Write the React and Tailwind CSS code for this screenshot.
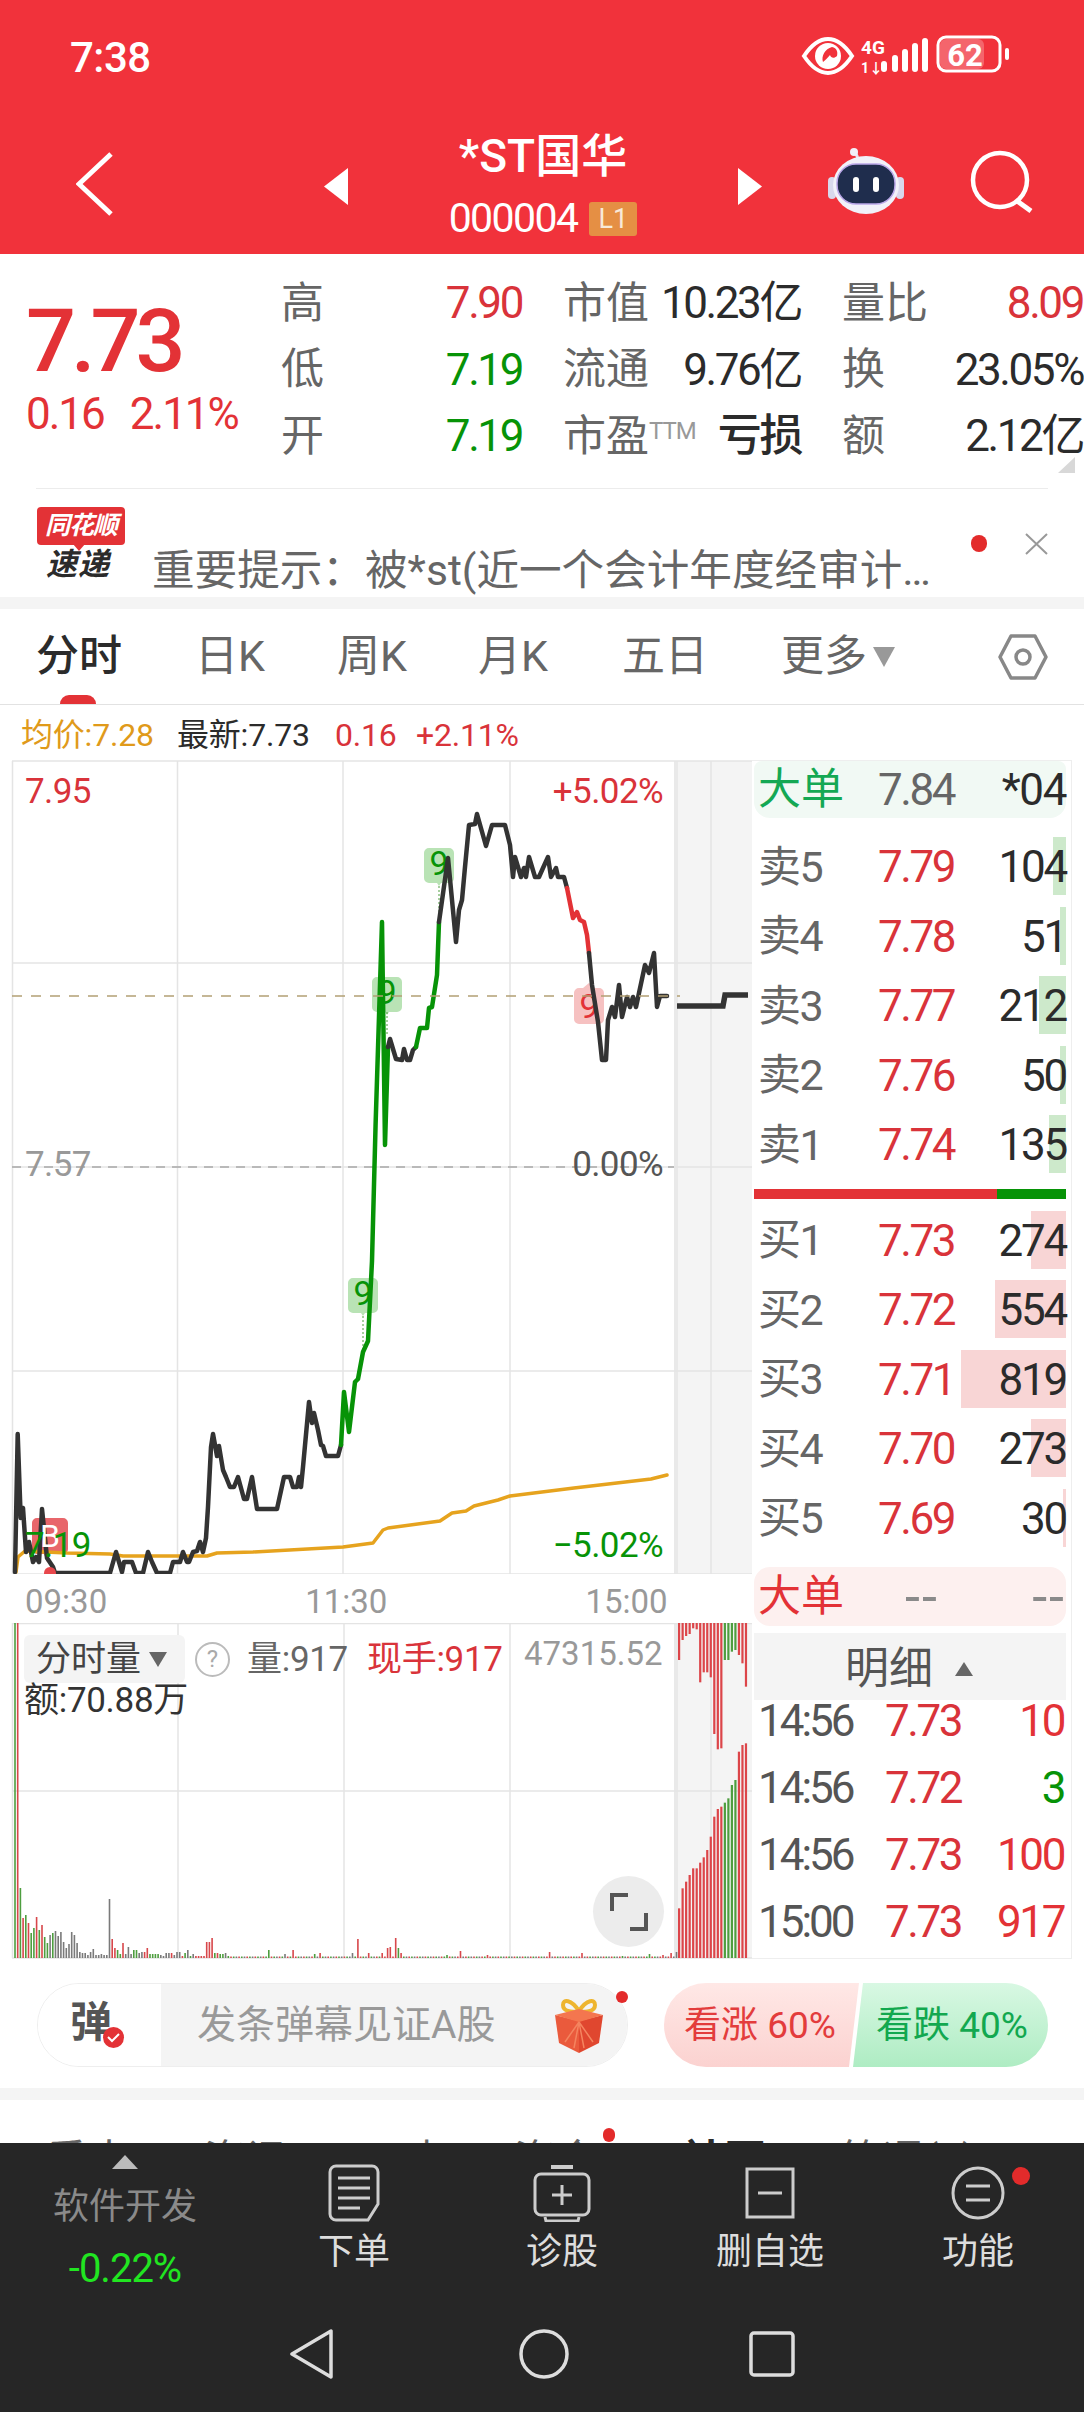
import React from "react";

const RED = "#e33236";
const GREEN = "#079307";

const priceBlack1 =
  "15,1572 17.7,1434 20.7,1518 23,1508 26,1552 29,1542 33,1562 36,1557 39,1562 42,1509 47,1558 53,1567 55,1573 110,1573 116,1552 122,1572 124,1562 132,1562 136,1573 143,1573 148,1552 152,1562 157,1573 170,1573 173,1562 180,1562 183,1552 187,1562 189,1562 193,1552 197,1551 200,1542 203,1552 206,1538 208,1507 211,1447 213,1434 217,1456 219,1446 223,1470 226,1477 230,1487 234,1487 238,1477 244,1499 247,1499 252,1477 257,1509 277,1509 284,1477 290,1477 293,1487 297,1487 299,1477 301,1487 303,1467 309,1402 312,1423 314,1413 318,1430 321,1445 323,1446 326,1456 338,1456 341,1445";
const priceGreen1 =
  "341,1445 344,1392 349,1432 355,1382 358,1379 363,1352 368,1341 372,1261 375.6,1124 382,922 385,1145 388,1047";
const priceBlack2 =
  "388,1047 390,1039 396,1059 402,1060 404,1049 407,1060 410,1060 413,1050 416,1047";
const priceGreen2 =
  "416,1047 420,1028 427,1028 429,1008 432,1007 437,975 439,922";
const priceBlack3 =
  "439,922 448,858 456,942 459,910 462,900 465,867 469,825 475,824 477,814 486,846 492,825 505,825 510,845 513,877 515,857 521,877 524,868 526,877 529,857 535,877 539,877 543,868 548,857 551,877 556,868 558,877 564,877 567,888";
const priceRed = "567,888 573,918 577,912 580,920 584,922 587,935 589,953";
const priceBlack4 =
  "589,953 592,985 598,1022 602,1060 606,1060 608,1020 612,1007 615,1017 619,985 622,1017 627,997 630,1007 633,997 636,1007 645,965 649,973 654,953 657,1007 660,996 667,996";
const avgLine =
  "16,1572 18,1557 25,1551 67,1553 110,1554 123,1556 207,1556 217,1553 253,1552 343,1547 373,1543 383,1530 388,1528 440,1521 452,1513 466,1511 474,1506 498,1500 510,1496 574,1488 651,1479 667,1475";

// volume bars, first part read off the picture, the rest is mostly flat
const volHead =
  "g335 r335 g70 r40 g43 r35 g25 g30 r41 g28 r33 g21 g15 k23 g25 k27 k22 k26 k16 k10 k14 k26 k23 k15 k6 k5 k5 k3 k6 k9 k3 k3 k4 k3 k3 k59 r19 r10 g8 g4 r15 k4 k11 k4 g8 g8 k5 k6 r6 r10 g4 g4 g4 g4 k3 k2 k5 k5 r5 k3 k6 k6 r2 g5 k8 g2 k4 r2 r2 r2 r2 r16 r16 r20 g5 r5 g4 g4 k5 g2";
const volPeaks = { 94: "g8", 100: "k4", 103: "r8", 111: "g4", 113: "r5", 125: "k5", 127: "r19", 131: "r5", 136: "r5", 138: "r10", 139: "r11", 141: "r20", 142: "g10", 143: "r5", 160: "g3", 165: "r7", 175: "r3", 198: "r6", 210: "r5", 225: "g2", 235: "g4", 240: "r3", 243: "r5", 245: "k6" };
const barColors = { r: "#d8474b", g: "#4e9e3f", k: "#7a7a7a" };
const volBars = Array.from({ length: 246 }, (_, i) => {
  const heads = volHead.split(" ");
  const tok = heads[i] || volPeaks[i] || (i % 3 === 0 ? "g1.5" : i % 3 === 1 ? "k1.5" : "r1.5");
  return { x: 15 + i * 2.7, color: barColors[tok[0]], h: Number(tok.slice(1)) };
});

const afterTop = [120, 60, 48, 42, 25, 28, 187, 157, 157, 172, 342, 388, 385, 120, 120, 95, 90, 105, 130, 200];
const afterBottom = [865, 805, 785, 765, 745, 745, 728, 712, 690, 650, 590, 567, 560, 548, 535, 495, 480, 395, 375, 370];
const afterColor = (i) => (i >= 13 && i <= 16 ? "#4e9e3f" : "#dc4549");

const sells = [
  ["卖5", "7.79", "104", 13],
  ["卖4", "7.78", "51", 6],
  ["卖3", "7.77", "212", 27],
  ["卖2", "7.76", "50", 6],
  ["卖1", "7.74", "135", 17],
];
const buys = [
  ["买1", "7.73", "274", 35],
  ["买2", "7.72", "554", 71],
  ["买3", "7.71", "819", 105],
  ["买4", "7.70", "273", 35],
  ["买5", "7.69", "30", 3],
];
const ticks = [
  ["14:56", "7.73", "10", RED],
  ["14:56", "7.72", "3", GREEN],
  ["14:56", "7.73", "100", RED],
  ["15:00", "7.73", "917", RED],
];

const Line = ({ points, color, width = 4.5 }) => (
  <polyline points={points} fill="none" stroke={color} strokeWidth={width} strokeLinejoin="round" strokeLinecap="round" />
);

const NineTag = ({ x, y, fill, color }) => (
  <g>
    <path d={`M${x + 5} ${y}h20a5 5 0 0 1 5 5v25a5 5 0 0 1 -5 5h-8l-2 3l-2 -3h-8a5 5 0 0 1 -5 -5v-25a5 5 0 0 1 5 -5z`} fill={fill} />
    <text x={x + 15} y={y + 27} textAnchor="middle" fontSize="34" fill={color}>9</text>
  </g>
);

const PriceChart = () => (
  <svg className="block" width="752" height="814" viewBox="0 760 752 814">
    <rect x="674" y="761" width="78" height="813" fill="#f4f4f4" />
    <rect x="674" y="761" width="4" height="813" fill="#e9e9e9" />
    <g stroke="#e4e4e4" strokeWidth="1.5">
      <line x1="12" y1="761" x2="752" y2="761" />
      <line x1="12" y1="963" x2="752" y2="963" />
      <line x1="12" y1="1167" x2="752" y2="1167" />
      <line x1="12" y1="1371" x2="752" y2="1371" />
      <line x1="12" y1="1574" x2="752" y2="1574" />
      <line x1="12.5" y1="761" x2="12.5" y2="1574" />
      <line x1="177.5" y1="761" x2="177.5" y2="1574" />
      <line x1="343" y1="761" x2="343" y2="1574" />
      <line x1="510" y1="761" x2="510" y2="1574" />
      <line x1="711" y1="761" x2="711" y2="1574" />
    </g>
    <line x1="12" y1="1167" x2="674" y2="1167" stroke="#a9a9a9" strokeWidth="1.5" strokeDasharray="9 7" />
    <g fontSize="35" letterSpacing="-0.6">
      <text x="25" y="803" fill="#d9333a">7.95</text>
      <text x="663" y="803" fill="#d9333a" textAnchor="end">+5.02%</text>
      <text x="25" y="1176" fill="#999999">7.57</text>
      <text x="663" y="1176" fill="#555555" textAnchor="end">0.00%</text>
      <text x="663" y="1557" fill={GREEN} textAnchor="end">−5.02%</text>
    </g>

    <NineTag x={372} y={977} fill="#b9e3b5" color={GREEN} />
    <NineTag x={424} y={848} fill="#b9e3b5" color={GREEN} />
    <NineTag x={348} y={1278} fill="#b9e3b5" color={GREEN} />
    <path d="M579 988h20a5 5 0 0 1 5 5v26a5 5 0 0 1 -5 5h-20a5 5 0 0 1 -5 -5v-26a5 5 0 0 1 5 -5z M589 983l6 5h-12z" fill="#f6c1c1" />
    <text x="589" y="1018" textAnchor="middle" fontSize="34" fill={RED}>9</text>
    <line x1="387" y1="1012" x2="387" y2="1036" stroke="#4e9e3f" strokeWidth="1" strokeDasharray="2 2" />
    <line x1="439" y1="886" x2="439" y2="920" stroke="#4e9e3f" strokeWidth="1" strokeDasharray="2 2" />
    <line x1="363" y1="1316" x2="363" y2="1350" stroke="#4e9e3f" strokeWidth="1" strokeDasharray="2 2" />

    <path d="M37 1518h26a5 5 0 0 1 5 5v26a5 5 0 0 1 -5 5h-13l-3 8l-3 -8h-7a5 5 0 0 1 -5 -5v-26a5 5 0 0 1 5 -5z" fill="#e8666b" />
    <Line points={avgLine} color="#e6a31e" width="3.5" />
    <Line points={priceBlack1} color="#333333" />
    <Line points={priceGreen1} color={GREEN} />
    <Line points={priceBlack2} color="#333333" />
    <Line points={priceGreen2} color={GREEN} />
    <Line points={priceBlack3} color="#333333" />
    <Line points={priceRed} color={RED} />
    <Line points={priceBlack4} color="#333333" />
    <polyline points="677,1006 723,1006 725,995 748,995" fill="none" stroke="#333333" strokeWidth="5.5" />
    <line x1="12" y1="996" x2="680" y2="996" stroke="#b3a074" strokeWidth="1.5" strokeDasharray="10 9" />
    <text x="50" y="1547" textAnchor="middle" fontSize="32" fill="#ffffff">B</text>
    <text x="25" y="1557" fontSize="35" letterSpacing="-0.6" fill={GREEN}>7.19</text>
    <circle cx="50" cy="1573" r="6" fill="#e8474c" />
  </svg>
);

const VolumeChart = () => (
  <svg className="block" width="752" height="336" viewBox="0 1623 752 336">
    <rect x="674" y="1623" width="78" height="335" fill="#f4f4f4" />
    <rect x="674" y="1623" width="4" height="335" fill="#e9e9e9" />
    <g stroke="#e4e4e4" strokeWidth="1.5">
      <line x1="12" y1="1623.5" x2="752" y2="1623.5" />
      <line x1="12" y1="1791" x2="752" y2="1791" />
      <line x1="12" y1="1958" x2="752" y2="1958" />
      <line x1="12.5" y1="1623" x2="12.5" y2="1958" />
      <line x1="178" y1="1623" x2="178" y2="1958" />
      <line x1="344" y1="1623" x2="344" y2="1958" />
      <line x1="510" y1="1623" x2="510" y2="1958" />
      <line x1="711" y1="1623" x2="711" y2="1958" />
    </g>
    {volBars.map((b, i) => (
      <rect key={i} x={b.x - 0.8} y={1958 - b.h} width="1.6" height={b.h} fill={b.color} />
    ))}
    {afterTop.map((v, i) => (
      <rect key={i} x={679 + i * 3.52 - 1} y="1623" width="2.2" height={v / 3 - 3} fill={afterColor(i)} />
    ))}
    {afterBottom.map((v, i) => (
      <rect key={i} x={679 + i * 3.52 - 1} y={1620 + v / 3} width="2.2" height={1958 - 1620 - v / 3} fill={afterColor(i)} />
    ))}
  </svg>
);

const Stat = ({ label, value, color = "text-[#2b2b2b]", width = "w-[241px]", bold = false, sup }) => (
  <div className={`${width} flex items-center justify-between`}>
    <span className="text-[43px] leading-none text-[#666666]">
      {label}
      {sup && <span className="text-[24px] align-[12px] text-[#999999] tracking-[-1px]">{sup}</span>}
    </span>
    <span className={`text-[44px] leading-none tracking-[-2.4px] ${color} ${bold ? "font-medium" : ""}`}>{value}</span>
  </div>
);

const BookRow = ({ row, barColor }) => (
  <div className="h-[69.5px] pt-[3px] flex items-center relative">
    <div className={`absolute right-0 top-[6px] h-[58px] ${barColor}`} style={{ width: row[3] }} />
    <span className="relative w-[124px] pl-1 text-[43px] leading-none text-[#666666] tracking-[-1.6px]">{row[0]}</span>
    <span className="relative text-[44px] leading-none text-[#d9333a] tracking-[-2.4px]">{row[1]}</span>
    <span className="relative ml-auto text-[44px] leading-none text-[#2b2b2b] tracking-[-2.2px]">{row[2]}</span>
  </div>
);

const OrderBook = () => (
  <div className="w-[320px] h-[1199px] border border-l-0 border-[#eeeeee] pl-[2px] pr-[5px] flex flex-col">
    <div className="h-[57px] shrink-0 bg-[#f1f9f4] rounded-b-2xl rounded-t-lg flex items-center">
      <span className="w-[124px] pl-1 text-[43px] leading-none text-[#14a854]">大单</span>
      <span className="text-[44px] leading-none text-[#666666] tracking-[-2.4px]">7.84</span>
      <span className="ml-auto text-[44px] leading-none text-[#2b2b2b] tracking-[-1.4px]">*04</span>
    </div>
    <div className="mt-[13px]">
      {sells.map((r) => (
        <BookRow key={r[0]} row={r} barColor="bg-[#cde9cb]" />
      ))}
    </div>
    <div className="mt-[10px] h-[10px] shrink-0 flex">
      <div className="w-[243px] bg-[#e33236]" />
      <div className="flex-1 bg-[#079307]" />
    </div>
    <div className="mt-[6px]">
      {buys.map((r) => (
        <BookRow key={r[0]} row={r} barColor="bg-[#f8d5d5]" />
      ))}
    </div>
    <div className="mt-[15px] h-[59px] shrink-0 bg-[#fdf0ef] rounded-2xl flex items-center">
      <span className="w-[151px] pl-1 text-[43px] leading-none text-[#e33236]">大单</span>
      <span className="text-[54px] leading-none text-[#8a8a8a] tracking-[2px]">--</span>
      <span className="ml-auto text-[54px] leading-none text-[#8a8a8a] tracking-[2px]">--</span>
    </div>
    <div className="mt-[7px] h-[67px] shrink-0 bg-[#f4f4f4] flex items-center pl-[91px] pt-[5px]">
      <span className="text-[44px] leading-none text-[#555555]">明细</span>
      <svg className="ml-[22px]" width="18" height="14" viewBox="0 0 18 14">
        <path d="M9 0l9 14h-18z" fill="#666666" />
      </svg>
    </div>
    <div className="pt-[6px] pl-[4px] pr-[2px] flex flex-col gap-[37px]">
      {ticks.map((t, i) => (
        <div key={i} className="h-[30px] flex items-center relative">
          <span className="w-[127px] text-[44px] leading-none text-[#555555] tracking-[-3px]">{t[0]}</span>
          <span className="text-[44px] leading-none text-[#d9333a] tracking-[-2.4px]">{t[1]}</span>
          <span className="ml-auto text-[44px] leading-none tracking-[-2.4px]" style={{ color: t[3] }}>{t[2]}</span>
        </div>
      ))}
    </div>
  </div>
);

const StatusBar = () => (
  <div className="h-[114px] flex items-end pb-[35px] pl-[70px] text-white">
    <span className="text-[42px] leading-none font-medium tracking-[-0.5px]">7:38</span>
    <svg className="ml-auto mr-[74px]" width="210" height="44" viewBox="0 0 210 44">
      <path d="M4 21c8-12 16-17 24-17s16 5 24 17c-8 12-16 17-24 17s-16-5-24-17z" fill="none" stroke="#fff" strokeWidth="4" />
      <circle cx="28" cy="21" r="13" fill="#fff" />
      <path d="M23 27c-2-6 2-13 9-15c5 1 6 5 5 9c-3 3-6 2-7-1c-2 2-4 5-7 7z" fill="#f1323b" />
      <text x="61" y="19" fontSize="19" fontWeight="700" fill="#fff">4G</text>
      <text x="61" y="38" fontSize="14" fontWeight="700" fill="#fff">1↓</text>
      <rect x="81" y="26" width="6" height="11" rx="3" fill="#fff" />
      <rect x="92" y="20" width="6" height="17" rx="3" fill="#fff" />
      <rect x="102" y="14" width="6" height="23" rx="3" fill="#fff" />
      <rect x="112" y="8" width="6" height="29" rx="3" fill="#fff" />
      <rect x="122" y="3" width="6" height="34" rx="3" fill="#fff" />
      <rect x="138" y="2" width="62" height="34" rx="8" fill="none" stroke="#fff" strokeWidth="3" />
      <rect x="140" y="4" width="44" height="30" rx="6" fill="#fff" fillOpacity="0.25" />
      <text x="165" y="31" fontSize="31" fontWeight="700" fill="#fff" textAnchor="middle">62</text>
      <rect x="205" y="13" width="4" height="12" rx="2" fill="#fff" />
    </svg>
  </div>
);

const Robot = () => (
  <svg width="76" height="68" viewBox="0 0 76 68">
    <path d="M30 12c-1-5-4-8-6-7" fill="none" stroke="#e8e4f2" strokeWidth="3" />
    <circle cx="26" cy="5" r="4" fill="#f2eff8" />
    <rect x="0" y="30" width="8" height="22" rx="4" fill="#d8d8ec" />
    <rect x="68" y="30" width="8" height="22" rx="4" fill="#d8d8ec" />
    <ellipse cx="38" cy="38" rx="33" ry="29" fill="#f1f1f9" />
    <rect x="9" y="17" width="58" height="40" rx="19" fill="#1f2d4d" stroke="#b9a6e8" strokeWidth="1.5" />
    <rect x="25" y="30" width="6" height="15" rx="3" fill="#ffffff" />
    <rect x="45" y="30" width="6" height="15" rx="3" fill="#ffffff" />
  </svg>
);

const NavBar = () => (
  <div className="h-[140px] flex items-start text-white relative">
    <svg className="ml-[76px] mt-[38px]" width="38" height="64" viewBox="0 0 38 64">
      <path d="M35 2L3 32l32 30" fill="none" stroke="#fff" strokeWidth="5" />
    </svg>
    <svg className="ml-[210px] mt-[54px]" width="24" height="37" viewBox="0 0 24 37">
      <path d="M24 0v37L0 18.500z" fill="#fff" />
    </svg>
    <div className="w-[390px] flex flex-col items-center pt-[17px]">
      <div className="text-[46px] leading-[50px] font-medium">*ST国华</div>
      <div className="mt-[17px] flex items-center gap-[12px]">
        <span className="text-[41px] leading-none tracking-[-1.6px]">000004</span>
        <span className="w-[48px] h-[34px] rounded-[3px] bg-[#e58f44] text-[#f8e9d8] text-[27px] leading-[34px] text-center">L1</span>
      </div>
    </div>
    <svg className="mt-[54px]" width="24" height="37" viewBox="0 0 24 37">
      <path d="M0 0v37l24-18.500z" fill="#fff" />
    </svg>
    <div className="ml-[66px] mt-[33px]"><Robot /></div>
    <svg className="ml-[66px] mt-[34px]" width="66" height="66" viewBox="0 0 66 66">
      <circle cx="30" cy="32" r="27" fill="none" stroke="#fff" strokeWidth="4.500" />
      <path d="M47 53l14 10" fill="none" stroke="#fff" strokeWidth="5" />
    </svg>
  </div>
);

const Quote = () => (
  <div className="h-[235px] flex relative">
    <div className="w-[281px] pl-[26px] pt-[43px]">
      <div className="text-[88px] leading-[88px] font-medium text-[#e33236] tracking-[-5px]">7.73</div>
      <div className="mt-[1px] flex gap-[26px] text-[44px] leading-[56px] text-[#e33236] tracking-[-2px]">
        <span>0.16</span>
        <span>2.11%</span>
      </div>
    </div>
    <div className="flex flex-col pt-[16px]">
      <div className="h-[66.5px] flex gap-[41px]">
        <Stat label="高" value="7.90" color="text-[#d9333a]" />
        <Stat label="市值" value="10.23亿" width="w-[238px]" />
        <Stat label="量比" value="8.09" color="text-[#d9333a]" />
      </div>
      <div className="h-[66.5px] flex gap-[41px]">
        <Stat label="低" value="7.19" color="text-[#079307]" />
        <Stat label="流通" value="9.76亿" width="w-[238px]" />
        <Stat label="换" value="23.05%" />
      </div>
      <div className="h-[66.5px] flex gap-[41px]">
        <Stat label="开" value="7.19" color="text-[#079307]" />
        <Stat label="市盈" sup="TTM" value="亏损" width="w-[238px]" bold />
        <Stat label="额" value="2.12亿" />
      </div>
    </div>
    <div className="absolute right-[9px] bottom-[16px] w-0 h-0 border-l-[17px] border-l-transparent border-b-[16px] border-b-[#d8d8d8]" />
    <div className="absolute left-[36px] right-[36px] bottom-0 h-[1.5px] bg-[#ececec]" />
  </div>
);

const News = () => (
  <div className="h-[108px] flex relative">
    <div className="pl-[37px] pt-[18px] w-[152px] shrink-0">
      <div className="w-[88px] h-[38px] rounded-[4px] bg-[#e33236] text-white text-[25px] leading-[38px] font-bold italic text-center tracking-[-1px] relative">
        同花顺
        <div className="absolute left-[36px] -bottom-[6px] w-0 h-0 border-x-[6px] border-x-transparent border-t-[7px] border-t-[#e33236]" />
      </div>
      <div className="mt-[5px] ml-[9px] text-[31px] leading-[30px] font-bold italic text-[#2b2b2b] tracking-[1px]">速递</div>
    </div>
    <div className="pt-[60px] text-[42.6px] leading-[42px] text-[#666666] whitespace-nowrap">重要提示：被*st(近一个会计年度经审计…</div>
    <div className="absolute left-[971px] top-[46px] w-[16px] h-[17px] rounded-full bg-[#e32b2b]" />
    <svg className="absolute left-[1025px] top-[44px]" width="23" height="22" viewBox="0 0 23 22">
      <path d="M1 1l21 20M22 1L1 21" fill="none" stroke="#999999" strokeWidth="2" />
    </svg>
  </div>
);

const TabBar = () => (
  <div className="h-[96px] border-b border-[#e2e2e2] relative">
    <div className="absolute inset-0 flex items-center">
      <div className="w-[36px]" />
      <span className="w-[159px] text-[43px] leading-none font-medium text-[#2b2b2b]">分时</span>
      <span className="w-[142px] text-[43px] leading-none text-[#666666]">日K</span>
      <span className="w-[141px] text-[43px] leading-none text-[#666666]">周K</span>
      <span className="w-[144px] text-[43px] leading-none text-[#666666]">月K</span>
      <span className="w-[159px] text-[43px] leading-none text-[#666666]">五日</span>
      <span className="text-[43px] leading-none text-[#666666]">更多</span>
      <svg className="ml-[6px]" width="22" height="22" viewBox="0 0 22 22">
        <path d="M0 1h22l-11 20z" fill="#999999" />
      </svg>
      <svg className="ml-[103px]" width="50" height="48" viewBox="0 0 50 48">
        <path d="M13 3h24l11 21l-11 21H13L2 24z" fill="none" stroke="#888888" strokeWidth="3.500" strokeLinejoin="round" />
        <circle cx="25" cy="24" r="7" fill="none" stroke="#888888" strokeWidth="3.500" />
      </svg>
    </div>
    <div className="absolute left-[60px] bottom-0 w-[36px] h-[9px] rounded-t-full bg-[#e33236]" />
  </div>
);

const InfoRow = () => (
  <div className="h-[55px] flex items-center pt-[4px] pl-[21px] text-[32px] leading-none tracking-[-0.2px]">
    <span className="w-[156px] text-[#e09a1a]">均价:7.28</span>
    <span className="w-[158px] text-[#2b2b2b]">最新:7.73</span>
    <span className="w-[81px] text-[#d9333a]">0.16</span>
    <span className="text-[#d9333a]">+2.11%</span>
  </div>
);

const AxisRow = () => (
  <div className="h-[49px] pt-[9px] flex text-[33px] leading-[38px] text-[#999999] relative">
    <span className="ml-[25px]">09:30</span>
    <span className="ml-[198px]">11:30</span>
    <span className="ml-[198px]">15:00</span>
  </div>
);

const VolumeOverlay = () => (
  <>
    <div className="absolute left-[24px] top-[12px] w-[161px] h-[48px] rounded-md bg-[#f4f4f4] flex items-center pl-[12px]">
      <span className="text-[35px] leading-none text-[#444444]">分时量</span>
      <svg className="ml-[8px]" width="18" height="16" viewBox="0 0 18 16">
        <path d="M0 1h18l-9 15z" fill="#666666" />
      </svg>
    </div>
    <div className="absolute left-[195px] top-[19px] w-[35px] h-[35px] rounded-full border-2 border-[#bbbbbb] text-[#aaaaaa] text-[24px] leading-[31px] text-center">?</div>
    <span className="absolute left-[247px] top-[19px] text-[35px] leading-none text-[#666666] tracking-[-0.3px]">量:917</span>
    <span className="absolute left-[367px] top-[19px] text-[35px] leading-none text-[#d9333a] tracking-[-0.3px]">现手:917</span>
    <span className="absolute left-[524px] top-[14px] text-[33px] leading-none text-[#999999]">47315.52</span>
    <span className="absolute left-[24px] top-[60px] text-[35px] leading-none text-[#333333] tracking-[-0.3px]">额:70.88万</span>
    <div className="absolute left-[593px] top-[253px] w-[71px] h-[71px] rounded-full bg-[#ececec] flex items-center justify-center">
      <svg width="38" height="38" viewBox="0 0 38 38">
        <path d="M2 18V2h16M36 20v16H20" fill="none" stroke="#555555" strokeWidth="4" />
      </svg>
    </div>
  </>
);

const Gift = () => (
  <svg width="52" height="56" viewBox="0 0 52 56">
    <path d="M26 14C18 2 10 2 10 8s8 8 16 6c8 2 16 0 16-6s-8-6-16 6z" fill="none" stroke="#eeb52f" strokeWidth="4" />
    <path d="M2 18l24 6v32L6 46z" fill="#ea5a3c" />
    <path d="M50 18l-24 6v32l20-10z" fill="#e0472f" />
    <path d="M2 18l24-6l24 6l-24 7z" fill="#f4764f" />
    <path d="M26 25l-14 20M26 25l-5 26M26 25l5 26M26 25l14 20" stroke="#f4845f" strokeWidth="1.500" />
  </svg>
);

const Danmu = () => (
  <div className="h-[129px] shrink-0 pt-[24px] flex pl-[37px]">
    <div className="w-[591px] h-[84px] rounded-full border border-[#eeeeee] flex overflow-hidden relative">
      <div className="w-[123px] shrink-0 bg-white pl-[32px] pt-[18px] relative">
        <span className="text-[42px] leading-none font-bold text-[#555555]">弹</span>
        <div className="absolute left-[65px] top-[43px] w-[21px] h-[21px] rounded-full bg-[#e33236] flex items-center justify-center">
          <svg width="13" height="10" viewBox="0 0 13 10">
            <path d="M1 4l4 4l7-7" fill="none" stroke="#ffffff" strokeWidth="2" />
          </svg>
        </div>
      </div>
      <div className="flex-1 bg-[#f4f4f4] flex items-center pl-[36px]">
        <span className="text-[39px] leading-none text-[#999999]">发条弹幕见证A股</span>
        <div className="ml-[58px]"><Gift /></div>
      </div>
    </div>
    <div className="-ml-[12px] w-[12px] h-[12px] mt-[8px] rounded-full bg-[#e32b2b] relative" />
    <div className="ml-[36px] w-[384px] h-[84px] rounded-full overflow-hidden flex">
      <div className="w-[195px] shrink-0 bg-gradient-to-b from-[#ffe8e6] to-[#fbd2d0] flex items-center pl-[20px] [clip-path:polygon(0_0,100%_0,calc(100%-10px)_100%,0_100%)]">
        <span className="text-[37px] leading-none text-[#e33c3c] whitespace-nowrap">看涨 60%</span>
      </div>
      <div className="flex-1 -ml-[6px] bg-gradient-to-b from-[#d8f8e3] to-[#aeecc3] flex items-center pl-[23px] [clip-path:polygon(10px_0,100%_0,100%_100%,0_100%)]">
        <span className="text-[37px] leading-none text-[#12a84f] whitespace-nowrap">看跌 40%</span>
      </div>
    </div>
  </div>
);

const PeekTabs = () => (
  <div className="h-[43px] shrink-0 overflow-hidden relative text-[42px] leading-[42px] text-[#666666] whitespace-nowrap flex pt-[40px] pl-[46px]">
    <span className="w-[158px]">重大</span>
    <span className="w-[160px]">资讯</span>
    <span className="w-[150px]">一点</span>
    <span className="w-[168px]">资金</span>
    <span className="w-[158px] font-bold text-[#2b2b2b]">社区</span>
    <span>简况(3)</span>
    <div className="absolute left-[603px] top-[28px] w-[12px] h-[14px] rounded-full bg-[#e32b2b]" />
  </div>
);

const bottomItems = [
  {
    label: "下单",
    icon: (
      <svg width="52" height="58" viewBox="0 0 52 58">
        <path d="M8 2h36a6 6 0 0 1 6 6v32l-10 16H8a6 6 0 0 1-6-6V8a6 6 0 0 1 6-6z" fill="none" stroke="#cccccc" strokeWidth="3" />
        <path d="M10 14h32M10 24h32M10 34h32M10 44h22" stroke="#cccccc" strokeWidth="3" />
      </svg>
    ),
  },
  {
    label: "诊股",
    icon: (
      <svg width="58" height="58" viewBox="0 0 58 58">
        <path d="M18 3h22" stroke="#cccccc" strokeWidth="4" />
        <rect x="2" y="10" width="54" height="41" rx="6" fill="none" stroke="#cccccc" strokeWidth="3" />
        <path d="M29 21v20M19 31h20" stroke="#cccccc" strokeWidth="3" />
        <path d="M12 53l1 4h32l1-4" fill="none" stroke="#cccccc" strokeWidth="3" />
      </svg>
    ),
  },
  {
    label: "删自选",
    icon: (
      <svg width="50" height="52" viewBox="0 0 50 52">
        <rect x="2" y="2" width="46" height="48" fill="none" stroke="#cccccc" strokeWidth="3" />
        <path d="M13 26h24" stroke="#cccccc" strokeWidth="3" />
      </svg>
    ),
  },
  {
    label: "功能",
    icon: (
      <svg width="54" height="54" viewBox="0 0 54 54">
        <ellipse cx="27" cy="27" rx="25" ry="25" fill="none" stroke="#cccccc" strokeWidth="3" />
        <path d="M15 20h24M15 34h24" stroke="#cccccc" strokeWidth="3" />
      </svg>
    ),
  },
];

const BottomBar = () => (
  <div className="flex-1 bg-[#262626] flex flex-col">
    <div className="h-[170px] flex">
      <div className="w-[250px] flex flex-col items-center pt-[12px]">
        <svg width="26" height="14" viewBox="0 0 26 14">
          <path d="M13 0l13 14H0z" fill="#bbbbbb" />
        </svg>
        <span className="mt-[20px] text-[36px] leading-none text-[#8a8a8a]">软件开发</span>
        <span className="mt-[24px] text-[40px] leading-none text-[#21e521] tracking-[-1px]">-0.22%</span>
      </div>
      {bottomItems.map((item) => (
        <div key={item.label} className="w-[208px] flex flex-col items-center relative">
          <div className="h-[76px] mt-[12px] flex items-center">{item.icon}</div>
          <span className="mt-[3px] text-[36px] leading-none text-[#dddddd]">{item.label}</span>
          {item.label === "功能" && <div className="absolute left-[138px] top-[24px] w-[18px] h-[18px] rounded-full bg-[#e32b2b]" />}
        </div>
      ))}
    </div>
    <div className="mt-[16px] flex items-center pl-[290px]">
      <svg width="44" height="50" viewBox="0 0 44 50">
        <path d="M41 2v46L2 25z" fill="none" stroke="#dddddd" strokeWidth="3.500" strokeLinejoin="round" />
      </svg>
      <svg className="ml-[185px]" width="50" height="50" viewBox="0 0 50 50">
        <circle cx="25" cy="25" r="23" fill="none" stroke="#dddddd" strokeWidth="3.500" />
      </svg>
      <svg className="ml-[180px]" width="46" height="46" viewBox="0 0 46 46">
        <rect x="2" y="2" width="42" height="42" rx="3" fill="none" stroke="#dddddd" strokeWidth="3.500" />
      </svg>
    </div>
  </div>
);

const App = () => {
  return (
    <div className="w-[1084px] h-[2412px] overflow-hidden flex flex-col bg-white font-['Roboto','Noto_Sans_CJK_SC',sans-serif]">
      <div className="h-[254px] shrink-0 bg-[#f1323b]">
        <StatusBar />
        <NavBar />
      </div>
      <Quote />
      <News />
      <div className="h-[12px] shrink-0 bg-[#f4f4f4]" />
      <TabBar />
      <InfoRow />
      <div className="flex h-[1199px] shrink-0">
        <div className="w-[752px] shrink-0 flex flex-col">
          <PriceChart />
          <AxisRow />
          <div className="relative">
            <VolumeChart />
            <VolumeOverlay />
          </div>
        </div>
        <OrderBook />
      </div>
      <Danmu />
      <div className="h-[12px] shrink-0 bg-[#f4f4f4]" />
      <PeekTabs />
      <BottomBar />
    </div>
  );
};

export default App;
